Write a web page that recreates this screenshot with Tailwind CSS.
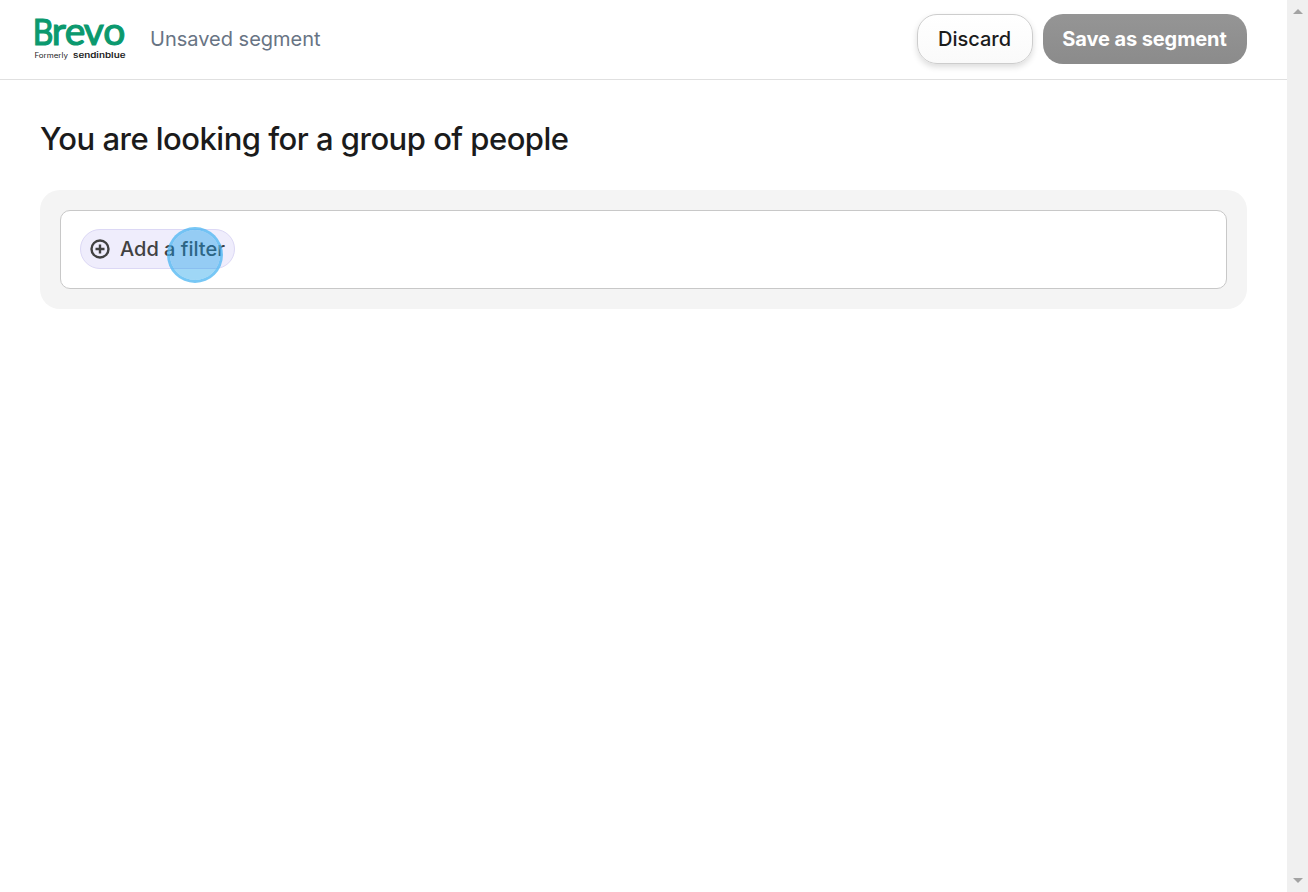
<!DOCTYPE html>
<html lang="en">
<head>
    <meta charset="UTF-8">
    <meta name="viewport" content="width=device-width, initial-scale=1.0">
    <title>Brevo - Unsaved segment</title>
    <script src="https://cdn.jsdelivr.net/npm/@tailwindcss/browser@4"></script>
</head>
<body class="bg-white font-['Inter',sans-serif]">
    <div class="flex h-screen overflow-hidden">
        <!-- Page -->
        <div class="flex-1 min-w-0">
            <!-- Header -->
            <header class="h-20 pl-[34px] pr-10 pb-px border-b border-[#e0e0e0] flex items-center">
                <!-- Logo -->
                <svg class="w-[92px] h-[46px] shrink-0 overflow-visible" viewBox="0 0 92 46" role="img" aria-label="Brevo, formerly sendinblue">
                    <g font-family="Lato, sans-serif" fill="#0b996e" stroke="#0b996e" stroke-width="1.2">
                        <text x="-1.3" y="29.4" font-size="36" textLength="20.6" lengthAdjust="spacingAndGlyphs">B</text>
                        <text x="17.8 30.8 49.8 69.2" y="29.4" font-size="39">revo</text>
                    </g>
                    <text x="0.4" y="42" textLength="33.5" lengthAdjust="spacingAndGlyphs" font-family="Inter, sans-serif" font-size="7" fill="#222">Formerly</text>
                    <text x="39" y="42" textLength="52.5" lengthAdjust="spacingAndGlyphs" font-family="Inter, sans-serif" font-size="7.5" font-weight="600" fill="#1b1b1b">sendinblue</text>
                </svg>
                <span class="ml-6 text-xl whitespace-nowrap text-[#687484]">Unsaved segment</span>

                <!-- Actions -->
                <div class="ml-auto flex items-center gap-2.5">
                    <button class="w-[116px] h-[50px] pr-px rounded-[20px] border border-[#cdcdcd] bg-linear-to-b from-white to-[#fafafa] shadow-[0_3px_6px_rgba(0,0,0,0.14)] text-xl font-medium text-[#1b1b1b]">Discard</button>
                    <button class="w-[204px] h-[50px] pr-px rounded-[20px] bg-linear-to-b from-[#959595] to-[#8b8b8b] text-xl font-bold tracking-[-0.1px] whitespace-nowrap text-white">Save as segment</button>
                </div>
            </header>

            <!-- Segment builder -->
            <main class="px-10 pt-10">
                <h1 class="h-[70px] text-[31px] leading-[38px] font-medium tracking-[-0.52px] whitespace-nowrap text-[#1b1b1b]">You are looking for a group of people</h1>
                <section class="p-5 rounded-[20px] bg-[#f4f4f4]">
                    <div class="h-[79px] px-[19px] pt-[18px] rounded-[10px] border border-[#c8c8c8] bg-white">
                        <div class="relative w-[155px]">
                            <button class="w-full h-10 pl-[9px] flex items-center gap-2.5 rounded-full border border-[#dcd8f5] bg-[#efedfc] text-xl font-medium whitespace-nowrap text-[#414141]">
                                <svg class="w-5 h-5 shrink-0" viewBox="0 0 20 20" fill="none" stroke="currentColor" stroke-width="2.4">
                                    <circle cx="10" cy="10" r="8.5"/>
                                    <path d="M10 5.5v9M5.5 10h9"/>
                                </svg>
                                Add a filter
                            </button>
                            <!-- Click marker -->
                            <span class="absolute left-[87px] -top-[2px] w-14 h-14 rounded-full border-[3px] border-[#4ab4f2]/75 bg-[#109ce8]/40 bg-clip-padding"></span>
                        </div>
                    </div>
                </section>
            </main>
        </div>

        <!-- Scrollbar -->
        <div class="w-[21px] shrink-0 bg-[#f0f0f0] flex flex-col items-center justify-between pt-[9px] pb-[9px]">
            <svg class="w-[10px] h-[5px]" viewBox="0 0 10 5" fill="#a3a3a3"><path d="M0 5L5 0l5 5z"/></svg>
            <svg class="w-[10px] h-[5px]" viewBox="0 0 10 5" fill="#a3a3a3"><path d="M0 0h10L5 5z"/></svg>
        </div>
    </div>
</body>
</html>
